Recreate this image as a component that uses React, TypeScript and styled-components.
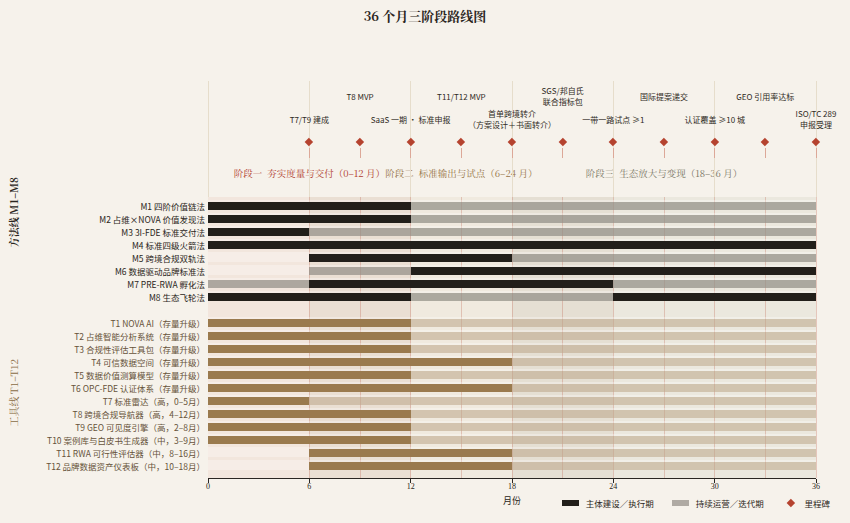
import React from "react"
import styled, { createGlobalStyle } from "styled-components"

const SANS = `"Noto Sans CJK SC", "Noto Sans", sans-serif`
const SERIF = `"Noto Serif CJK SC", "Liberation Serif", "Noto Sans CJK SC", serif`

const MONTHS = 36
const pct = (m: number) => `${(m / MONTHS) * 100}%`

const GlobalStyle = createGlobalStyle`
    html, body {
        margin: 0;
        padding: 0;
        background: #f6f2eb;
    }
`

type Kind = "build" | "run" | "tool" | "toolRun"
type Seg = [number, number, Kind]
type Lane = { label: string; segs: Seg[] } | null

const methodLanes: Lane[] = [
    { label: "M1 四阶价值链法", segs: [[0, 12, "build"], [12, 36, "run"]] },
    { label: "M2 占维×NOVA 价值发现法", segs: [[0, 12, "build"], [12, 36, "run"]] },
    { label: "M3 3I-FDE 标准交付法", segs: [[0, 6, "build"], [6, 36, "run"]] },
    { label: "M4 标准四级火箭法", segs: [[0, 36, "build"]] },
    { label: "M5 跨境合规双轨法", segs: [[6, 18, "build"], [18, 36, "run"]] },
    { label: "M6 数据驱动品牌标准法", segs: [[6, 12, "run"], [12, 36, "build"]] },
    { label: "M7 PRE-RWA 孵化法", segs: [[0, 6, "run"], [6, 24, "build"], [24, 36, "run"]] },
    { label: "M8 生态飞轮法", segs: [[0, 12, "build"], [12, 24, "run"], [24, 36, "build"]] },
]

const tool = (label: string, start: number, end: number): Lane => ({
    label,
    segs: [[start, end, "tool"], [end, 36, "toolRun"]],
})

const toolLanes: Lane[] = [
    tool("T1 NOVA AI（存量升级）", 0, 12),
    tool("T2 占维智能分析系统（存量升级）", 0, 12),
    tool("T3 合规性评估工具包（存量升级）", 0, 12),
    tool("T4 可信数据空间（存量升级）", 0, 18),
    tool("T5 数据价值测算模型（存量升级）", 0, 12),
    tool("T6 OPC-FDE 认证体系（存量升级）", 0, 18),
    tool("T7 标准雷达（高，0–5月）", 0, 6),
    tool("T8 跨境合规导航器（高，4–12月）", 0, 12),
    tool("T9 GEO 可见度引擎（高，2–8月）", 0, 12),
    tool("T10 案例库与白皮书生成器（中，3–9月）", 0, 12),
    tool("T11 RWA 可行性评估器（中，8–16月）", 6, 18),
    tool("T12 品牌数据资产仪表板（中，10–18月）", 6, 18),
]

const lanes: Lane[] = [...methodLanes, null, ...toolLanes]

const milestones = [
    { m: 6, high: false, lines: ["T7/T9 建成"] },
    { m: 9, high: true, lines: ["T8 MVP"] },
    { m: 12, high: false, lines: ["SaaS 一期 · 标准申报"] },
    { m: 15, high: true, lines: ["T11/T12 MVP"] },
    { m: 18, high: false, lines: ["首单跨境转介", "（方案设计＋书面转介）"] },
    { m: 21, high: true, lines: ["SGS/邦自氏", "联合指标包"] },
    { m: 24, high: false, lines: ["一带一路试点 ≥1"] },
    { m: 27, high: true, lines: ["国际提案递交"] },
    { m: 30, high: false, lines: ["认证覆盖 ≥10 城"] },
    { m: 33, high: true, lines: ["GEO 引用率达标"] },
    { m: 36, high: false, lines: ["ISO/TC 289", "申报受理"] },
]

const phases = [
    { name: "阶段一", text: "夯实度量与交付（0–12 月）", from: 0, to: 12, color: "#b0392b" },
    { name: "阶段二", text: "标准输出与试点（6–24 月）", from: 6, to: 24, color: "#957246" },
    { name: "阶段三", text: "生态放大与变现（18–36 月）", from: 18, to: 36, color: "#7a7766" },
]

const sixMonths = [0, 6, 12, 18, 24, 30, 36]
const milestoneMonths = [6, 9, 12, 15, 18, 21, 24, 27, 30, 33, 36]

const Page = styled.div`
    width: 850px;
    height: 523px;
    background: #f6f2eb;
    color: #2a2520;
    font-family: ${SANS};
    overflow: hidden;
`

const Title = styled.h1`
    margin: 0;
    height: 32px;
    line-height: 32px;
    text-align: center;
    font-family: ${SERIF};
    font-size: 13px;
    font-weight: 700;
    color: #2a2520;
`

const Chart = styled.div`
    display: grid;
    grid-template-columns: 28px 180px 608px 1fr;
    grid-template-rows: 116px 281px 45px;
    margin-top: 49px;
`

const SideTitles = styled.div`
    grid-column: 1;
    grid-row: 1 / 3;
    display: flex;
    flex-direction: column;
    align-items: center;
`

const SideTitle = styled.div<{ $tool?: boolean; $offset: number }>`
    margin-top: ${(p) => p.$offset}px;
    writing-mode: vertical-rl;
    text-orientation: sideways;
    transform: rotate(180deg);
    font-family: ${SERIF};
    font-size: 10px;
    line-height: 12px;
    white-space: nowrap;
    font-weight: ${(p) => (p.$tool ? 400 : 700)};
    color: ${(p) => (p.$tool ? "#8a6d45" : "#2a2520")};
`

const MilestonePanel = styled.div`
    grid-column: 3;
    grid-row: 1;
    position: relative;
    display: flex;
    flex-direction: column;
`

const GuideLine = styled.div`
    position: absolute;
    top: 0;
    bottom: 0;
    width: 1px;
    margin-left: -0.5px;
    background: #e6ddcb;
`

const MilestoneTrack = styled.div`
    position: relative;
    height: 86px;
`

const Milestone = styled.div`
    position: absolute;
    top: 0;
    width: 0;
    display: flex;
    flex-direction: column;
    align-items: center;
`

const MilestoneLabel = styled.div<{ $high: boolean }>`
    height: 54px;
    box-sizing: border-box;
    padding: ${(p) => (p.$high ? "0 0 24px" : "22px 0 0")};
    display: flex;
    flex-direction: column;
    justify-content: center;
    align-items: center;
    white-space: nowrap;
    font-size: 8px;
    line-height: 11px;
    color: #2f2a24;
`

const Diamond = styled.div`
    flex-shrink: 0;
    width: 5.8px;
    height: 5.8px;
    background: #b5432f;
    transform: rotate(45deg);
`

const MilestoneDiamond = styled(Diamond)`
    margin-top: 4.1px;
`

const Stem = styled.div`
    width: 1px;
    height: 10px;
    margin-top: 3px;
    background: #dca898;
`

const PhaseRow = styled.div`
    display: grid;
    grid-template-columns: repeat(36, 1fr);
    height: 12px;
`

const PhaseLabel = styled.div<{ $color: string }>`
    grid-row: 1;
    justify-self: center;
    white-space: nowrap;
    font-family: ${SERIF};
    font-size: 9.5px;
    line-height: 12px;
    color: ${(p) => p.$color};
`

const PhaseName = styled.span`
    margin-right: 5px;
`

const RowLabels = styled.div`
    grid-column: 2;
    grid-row: 2;
    padding: 2.5px 3px 0 0;
    display: flex;
    flex-direction: column;
    align-items: flex-end;
`

const RowLabel = styled.div<{ $tool?: boolean }>`
    height: 13px;
    line-height: 12px;
    font-size: 8.5px;
    white-space: nowrap;
    color: ${(p) => (p.$tool ? "#66523a" : "#2a2520")};
`

const Plot = styled.div`
    grid-column: 3;
    grid-row: 2;
    position: relative;
    box-sizing: border-box;
    padding-top: 2.5px;
    background: linear-gradient(
        to right,
        #f2e6dd 0 16.667%,
        #eadfd3 16.667% 33.333%,
        #f0eadf 33.333% 50%,
        #e5dfd3 50% 66.667%,
        #ebe8de 66.667% 100%
    );
`

const Gridline = styled.div`
    position: absolute;
    top: 0;
    bottom: 0;
    width: 1px;
    margin-left: -0.5px;
    background: rgba(190, 100, 80, 0.3);
`

const Lanes = styled.div`
    position: relative;
    display: flex;
    flex-direction: column;
`

const LaneRow = styled.div`
    position: relative;
    height: 13px;
`

const Track = styled.div`
    position: absolute;
    left: 0;
    right: 0;
    top: 0;
    height: 10.5px;
    background: rgba(255, 255, 255, 0.3);
`

const barColors: Record<Kind, string> = {
    build: "#221f1a",
    run: "rgba(120, 117, 107, 0.58)",
    tool: "#9a7a4e",
    toolRun: "rgba(154, 122, 78, 0.37)",
}

const Bar = styled.div<{ $kind: Kind }>`
    position: absolute;
    top: 2.5px;
    height: 8px;
    background: ${(p) => barColors[p.$kind]};
`

const Axis = styled.div`
    grid-column: 3;
    grid-row: 3;
    position: relative;
    border-top: 1px solid #2a2622;
`

const Tick = styled.div`
    position: absolute;
    top: 0;
    width: 1px;
    height: 3.5px;
    margin-left: -0.5px;
    background: #2a2622;
`

const TickLabel = styled.div`
    position: absolute;
    top: 3px;
    transform: translateX(-50%);
    font-family: "Liberation Serif", serif;
    font-size: 8px;
    line-height: 9px;
    color: #2a2520;
`

const AxisTitle = styled.div`
    position: absolute;
    top: 16px;
    left: 50%;
    transform: translateX(-50%);
    font-size: 9px;
    line-height: 11px;
    color: #2a2520;
`

const Legend = styled.div`
    grid-column: 3 / 5;
    grid-row: 3;
    justify-self: end;
    align-self: start;
    margin: 19.5px 20px 0 0;
    display: flex;
    align-items: center;
    height: 11px;
    font-size: 8.5px;
    color: #2a2520;
`

const LegendItem = styled.div`
    display: flex;
    align-items: center;
    gap: 7px;
    & + & {
        margin-left: 18px;
    }
`

const Swatch = styled.div<{ $color: string }>`
    width: 17px;
    height: 6px;
    background: ${(p) => p.$color};
`

const LegendDiamond = styled(Diamond)`
    margin: 0 4px 0 6px;
`

const App = () => {
    return (
        <Page>
            <GlobalStyle />
            <Title>36 个月三阶段路线图</Title>
            <Chart>
                <SideTitles>
                    <SideTitle $offset={96}>方法线 M1–M8</SideTitle>
                    <SideTitle $tool $offset={112}>工具线 T1–T12</SideTitle>
                </SideTitles>

                <MilestonePanel>
                    {sixMonths.map((m) => (
                        <GuideLine key={m} style={{ left: pct(m) }} />
                    ))}
                    <MilestoneTrack>
                        {milestones.map((ms) => (
                            <Milestone key={ms.m} style={{ left: pct(ms.m) }}>
                                <MilestoneLabel $high={ms.high}>
                                    {ms.lines.map((line) => (
                                        <span key={line}>{line}</span>
                                    ))}
                                </MilestoneLabel>
                                <MilestoneDiamond />
                                <Stem />
                            </Milestone>
                        ))}
                    </MilestoneTrack>
                    <PhaseRow>
                        {phases.map((ph) => (
                            <PhaseLabel
                                key={ph.name}
                                $color={ph.color}
                                style={{ gridColumn: `${ph.from + 1} / ${ph.to + 1}` }}
                            >
                                <PhaseName>{ph.name}</PhaseName>
                                {ph.text}
                            </PhaseLabel>
                        ))}
                    </PhaseRow>
                </MilestonePanel>

                <RowLabels>
                    {lanes.map((lane, i) => (
                        <RowLabel key={i} $tool={i > methodLanes.length}>
                            {lane ? lane.label : ""}
                        </RowLabel>
                    ))}
                </RowLabels>

                <Plot>
                    {milestoneMonths.map((m) => (
                        <Gridline key={m} style={{ left: pct(m) }} />
                    ))}
                    <Lanes>
                        {lanes.map((lane, i) => (
                            <LaneRow key={i}>
                                {lane && <Track />}
                                {lane &&
                                    lane.segs.map(([from, to, kind]) => (
                                        <Bar
                                            key={from}
                                            $kind={kind}
                                            style={{ left: pct(from), width: pct(to - from) }}
                                        />
                                    ))}
                            </LaneRow>
                        ))}
                    </Lanes>
                </Plot>

                <Axis>
                    {sixMonths.map((m) => (
                        <React.Fragment key={m}>
                            <Tick style={{ left: pct(m) }} />
                            <TickLabel style={{ left: pct(m) }}>{m}</TickLabel>
                        </React.Fragment>
                    ))}
                    <AxisTitle>月份</AxisTitle>
                </Axis>

                <Legend>
                    <LegendItem>
                        <Swatch $color="#221f1a" />
                        主体建设／执行期
                    </LegendItem>
                    <LegendItem>
                        <Swatch $color="#afaaa3" />
                        持续运营／迭代期
                    </LegendItem>
                    <LegendItem>
                        <LegendDiamond />
                        里程碑
                    </LegendItem>
                </Legend>
            </Chart>
        </Page>
    )
}

export default App
